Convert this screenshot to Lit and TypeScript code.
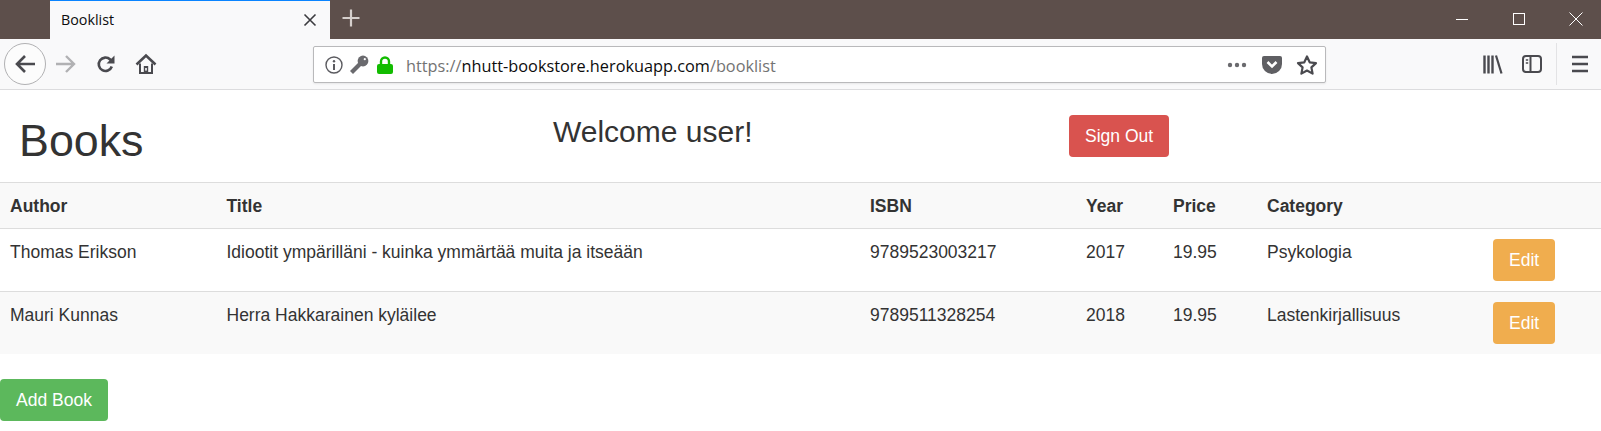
import { LitElement, css, html, svg } from "lit";
import { customElement } from "lit/decorators.js";

const books = [
  {
    author: "Thomas Erikson",
    title: "Idiootit ympärilläni - kuinka ymmärtää muita ja itseään",
    isbn: "9789523003217",
    year: 2017,
    price: "19.95",
    category: "Psykologia",
  },
  {
    author: "Mauri Kunnas",
    title: "Herra Hakkarainen kyläilee",
    isbn: "9789511328254",
    year: 2018,
    price: "19.95",
    category: "Lastenkirjallisuus",
  },
];

const icon = (size: number, body: unknown) =>
  html`<svg width=${size} height=${size} viewBox="0 0 ${size} ${size}">${body}</svg>`;

@customElement("app-root")
export class AppRoot extends LitElement {
  render() {
    return html`
      <div class="tabstrip">
        <div class="tab">
          <span class="tab-title">Booklist</span>
          ${icon(16, svg`<path d="M2.5 2.5l11 11M13.5 2.5l-11 11" stroke="#3b3b3f" stroke-width="1.6" fill="none"/>`)}
        </div>
        <div class="newtab">
          ${icon(20, svg`<path d="M10 1.5v17M1.5 10h17" stroke="#d5cfcc" stroke-width="2.2" fill="none"/>`)}
        </div>
        <div class="winbtns">
          ${icon(14, svg`<path d="M1 7.5h12" stroke="#fff" stroke-width="1" fill="none"/>`)}
          ${icon(14, svg`<rect x="1.5" y="1.5" width="11" height="11" stroke="#fff" stroke-width="1" fill="none"/>`)}
          ${icon(14, svg`<path d="M0.5 0.5l13 13M13.5 0.5l-13 13" stroke="#fff" stroke-width="1" fill="none"/>`)}
        </div>
      </div>

      <div class="toolbar">
        <div class="back">
          ${icon(22, svg`<path d="M21 11H3M11 3l-8 8 8 8" stroke="#4a4a4f" stroke-width="2.6" fill="none"/>`)}
        </div>
        <div class="tool fwd">
          ${icon(22, svg`<path d="M1 11h18M11 3l8 8-8 8" stroke="#b1b1b3" stroke-width="2.4" fill="none"/>`)}
        </div>
        <div class="tool reload">
          ${icon(20, svg`<path d="M15.8 12.5a6.7 6.7 0 1 1-1.6-7l2.3 2.3" stroke="#4a4a4f" stroke-width="2.6" fill="none"/><path d="M18.5 1.5v8h-8z" fill="#4a4a4f"/>`)}
        </div>
        <div class="tool home">
          ${icon(22, svg`<path d="M1.5 11.5L11 2.5l9.5 9" stroke="#4a4a4f" stroke-width="2.6" fill="none"/><path d="M5 10.5V20h12v-9.5" stroke="#4a4a4f" stroke-width="2" fill="none"/><path d="M8.8 20.5v-7.5h4.4v7.5z" fill="#4a4a4f"/><rect x="10.2" y="15" width="1.6" height="2.6" fill="#f9f9fa"/>`)}
        </div>

        <div class="urlbar">
          ${icon(18, svg`<circle cx="9" cy="9" r="8" stroke="#5b5b60" stroke-width="1.4" fill="none"/><circle cx="9" cy="5.2" r="1.2" fill="#5b5b60"/><path d="M9 8v6" stroke="#5b5b60" stroke-width="2"/>`)}
          <span class="key">
            ${icon(20, svg`<circle cx="14" cy="6" r="5.4" fill="#6a6a6e"/><circle cx="15.8" cy="4.2" r="1.1" fill="#fff"/><path d="M11.5 8.5L2.5 17.5" stroke="#6a6a6e" stroke-width="4.2" fill="none"/>`)}
          </span>
          <span class="lock">
            ${icon(18, svg`<path d="M5 9V5.5a4 4 0 0 1 8 0V9" stroke="#12bc00" stroke-width="2.4" fill="none"/><rect x="1" y="8" width="16" height="10" rx="2" fill="#12bc00"/>`)}
          </span>
          <span class="url"><span class="dim">https://</span>nhutt-bookstore.herokuapp.com<span class="dim">/booklist</span></span>
          <span class="dots">
            ${icon(20, svg`<circle cx="3" cy="10" r="2.2" fill="#6a6a6e"/><circle cx="10" cy="10" r="2.2" fill="#6a6a6e"/><circle cx="17" cy="10" r="2.2" fill="#6a6a6e"/>`)}
          </span>
          <span class="pocket">
            ${icon(22, svg`<path d="M3 2h16a2 2 0 0 1 2 2v6a10 10 0 0 1-20 0V4a2 2 0 0 1 2-2z" fill="#5f5f63"/><path d="M6.5 8l4.5 4.5L15.5 8" stroke="#fff" stroke-width="2.6" fill="none"/>`)}
          </span>
          <span class="star">
            ${icon(22, svg`<path d="M11 2.5l2.7 5.8 6.3.8-4.6 4.3 1.2 6.2-5.6-3.1-5.6 3.1 1.2-6.2L2 9.1l6.3-.8z" stroke="#4a4a4f" stroke-width="2.2" stroke-linejoin="round" fill="none"/>`)}
          </span>
        </div>

        <div class="tool library">
          ${icon(22, svg`<path d="M3.5 2.5v18M7.5 2.5v18M11.5 2.5v18" stroke="#4a4a4f" stroke-width="2.4" fill="none"/><path d="M15 2.5l5.5 18" stroke="#4a4a4f" stroke-width="2.2" fill="none"/>`)}
        </div>
        <div class="tool sidebar">
          ${icon(22, svg`<rect x="2" y="3" width="18" height="16" rx="3" stroke="#4a4a4f" stroke-width="2" fill="none"/><path d="M9.5 3v16" stroke="#4a4a4f" stroke-width="2" fill="none"/><path d="M4.8 7h2.4M4.8 10h2.4" stroke="#4a4a4f" stroke-width="1.4"/>`)}
        </div>
        <div class="sep"></div>
        <div class="tool menu">
          ${icon(18, svg`<path d="M1 2h16M1 9h16M1 16h16" stroke="#4a4a4f" stroke-width="2.4" fill="none"/>`)}
        </div>
      </div>

      <main>
        <div class="head">
          <h1>Books</h1>
          <h2>Welcome user!</h2>
          <div><button class="btn danger">Sign Out</button></div>
        </div>

        <table>
          <colgroup>
            <col style="width:216.5px" />
            <col style="width:643.5px" />
            <col style="width:216px" />
            <col style="width:87px" />
            <col style="width:94px" />
            <col style="width:226px" />
            <col />
          </colgroup>
          <thead>
            <tr>
              <th>Author</th>
              <th>Title</th>
              <th>ISBN</th>
              <th>Year</th>
              <th>Price</th>
              <th>Category</th>
              <th></th>
            </tr>
          </thead>
          <tbody>
            ${books.map(
              (b) => html`
                <tr>
                  <td>${b.author}</td>
                  <td>${b.title}</td>
                  <td>${b.isbn}</td>
                  <td>${b.year}</td>
                  <td>${b.price}</td>
                  <td>${b.category}</td>
                  <td class="action"><button class="btn warning">Edit</button></td>
                </tr>
              `
            )}
          </tbody>
        </table>

        <button class="btn success add">Add Book</button>
      </main>
    `;
  }

  static styles = css`
    :host {
      display: block;
      font-family: "Liberation Sans", Arial, sans-serif;
      color: #333;
      background: #fff;
    }

    /* Browser chrome */
    .tabstrip {
      display: flex;
      height: 39px;
      background: #5d4f4b;
    }
    .tab {
      display: flex;
      align-items: center;
      justify-content: space-between;
      box-sizing: border-box;
      width: 280px;
      margin-left: 50px;
      padding: 0 12px 0 11px;
      background: #f9f9fa;
      border-top: 1px solid #0a84ff;
      color: #0c0c0d;
      font-family: "Open Sans", sans-serif;
      font-size: 14.3px;
    }
    .tab-title {
      padding-bottom: 2px;
    }
    .newtab {
      display: flex;
      align-items: center;
      margin-left: 11px;
      margin-bottom: 3px;
    }
    .winbtns {
      display: flex;
      align-items: center;
      gap: 43px;
      margin-left: auto;
      margin-right: 18px;
      margin-bottom: 2px;
    }
    .toolbar {
      display: flex;
      align-items: center;
      box-sizing: border-box;
      height: 51px;
      background: #f9f9fa;
      border-bottom: 1px solid #dcdcde;
    }
    .tool {
      display: flex;
      align-items: center;
      justify-content: center;
      flex: none;
    }
    .back {
      display: flex;
      align-items: center;
      justify-content: center;
      flex: none;
      box-sizing: border-box;
      width: 42px;
      height: 42px;
      margin-left: 4px;
      background: #fcfcfc;
      border: 1px solid #b1b1b3;
      border-radius: 50%;
    }
    .fwd {
      width: 22px;
      margin-left: 9px;
    }
    .reload {
      width: 20px;
      margin-left: 19px;
    }
    .home {
      width: 22px;
      margin-left: 19px;
    }
    .urlbar {
      display: flex;
      align-items: center;
      flex: none;
      box-sizing: border-box;
      width: 1013px;
      height: 37px;
      margin-left: 156px;
      margin-top: 1px;
      padding: 0 7px 0 11px;
      background: #fff;
      border: 1px solid #b9b9bb;
      border-radius: 2px;
      box-shadow: 0 1px 2px rgba(0, 0, 0, 0.08);
    }
    .key {
      display: flex;
      margin-left: 6px;
    }
    .lock {
      display: flex;
      margin-left: 7px;
    }
    .url {
      margin-left: 12px;
      padding-top: 2px;
      font-family: "Open Sans", sans-serif;
      font-size: 16.3px;
      color: #0c0c0d;
      white-space: nowrap;
    }
    .dim {
      color: #737373;
    }
    .dots {
      display: flex;
      margin-left: auto;
    }
    .pocket {
      display: flex;
      margin-left: 14px;
    }
    .star {
      display: flex;
      margin-left: 13px;
    }
    .library {
      width: 22px;
      margin-left: 155px;
    }
    .sidebar {
      width: 22px;
      margin-left: 18px;
    }
    .sep {
      flex: none;
      width: 1px;
      height: 42px;
      margin-left: 13px;
      background: #e3e3e5;
    }
    .menu {
      width: 18px;
      margin-left: 14px;
    }

    /* Page */
    .head {
      display: grid;
      grid-template-columns: 534px 516px auto;
      box-sizing: border-box;
      height: 92px;
      padding-left: 19px;
    }
    h1 {
      margin: 0;
      padding-top: 21px;
      font-size: 44.8px;
      font-weight: 400;
      line-height: 58px;
    }
    h2 {
      margin: 0;
      padding-top: 22px;
      font-size: 30px;
      font-weight: 400;
      line-height: 40px;
    }
    .head > div {
      padding-top: 25px;
    }
    table {
      width: 100%;
      table-layout: fixed;
      border-collapse: collapse;
      font-size: 17.5px;
    }
    th,
    td {
      padding: 11px 10px 9px;
      line-height: 25px;
      text-align: left;
      vertical-align: top;
      border-top: 1px solid #ddd;
    }
    td.action {
      padding: 10px;
    }
    th {
      font-weight: 700;
      border-bottom: 1px solid #ddd;
    }
    thead tr,
    tbody tr:nth-child(even) {
      background: #f9f9f9;
    }
    .btn {
      display: block;
      box-sizing: border-box;
      height: 42px;
      padding: 0 15px;
      border: 0;
      border-radius: 4px;
      color: #fff;
      font-family: inherit;
      font-size: 17.5px;
    }
    .danger {
      background: #d9534f;
      padding: 0 16px;
    }
    .warning {
      background: #f0ad4e;
      padding: 0 16px;
    }
    .success {
      background: #5cb85c;
      padding: 0 16px;
    }
    .add {
      margin-top: 25px;
    }
  `;
}

declare global {
  interface HTMLElementTagNameMap {
    "app-root": AppRoot;
  }
}
